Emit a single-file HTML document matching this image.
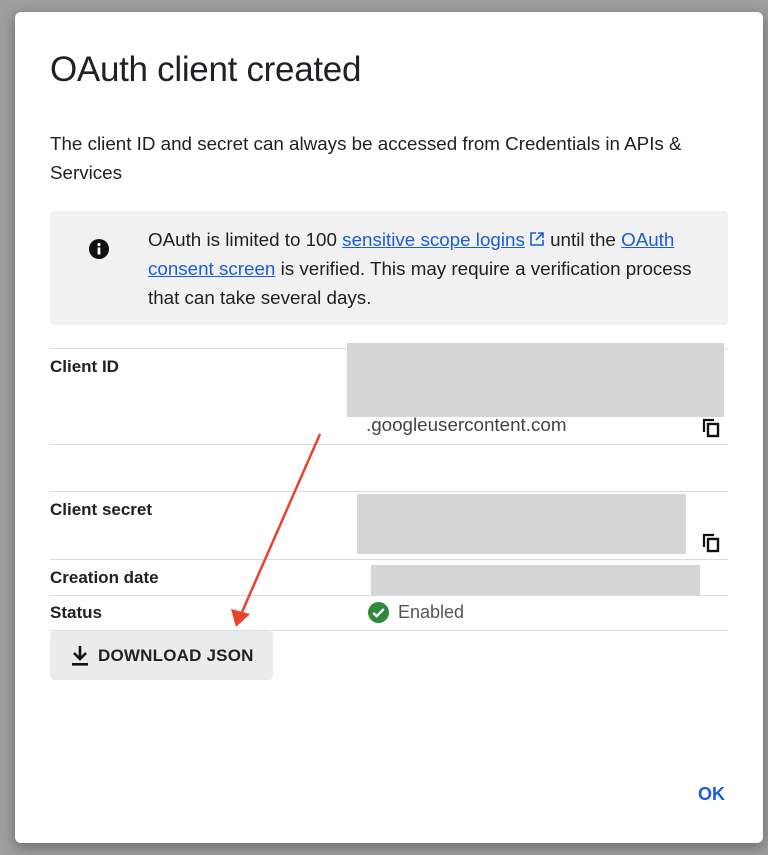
<!DOCTYPE html>
<html><head><meta charset="utf-8"><style>
body{margin:0;width:768px;height:855px;background:#9e9e9e;position:relative;overflow:hidden;font-family:"Liberation Sans",sans-serif;color:#202124}
.d{position:absolute;left:15px;top:12px;width:748px;height:831px;background:#fff;border-radius:6px;box-shadow:0 4px 14px rgba(0,0,0,.35)}
.a{position:absolute;white-space:nowrap}
.t{font-size:35px;left:50px;top:50px;letter-spacing:-0.3px}
.p{font-size:18.8px;line-height:29px}
.hr{position:absolute;left:50px;width:678px;height:1px;background:#dadce0}
.g{position:absolute;background:#d6d6d6}
.l{font-size:17px;font-weight:bold;color:#202124}
a{color:#1a5ed8;text-decoration:underline}
</style></head><body>
<div class="d"></div>
<div class="a t">OAuth client created</div>
<div class="a p" style="left:50px;top:129px">The client ID and secret can always be accessed from Credentials in APIs &amp;<br>Services</div>
<div style="position:absolute;left:50px;top:211px;width:678px;height:114px;background:#f1f1f1;border-radius:4px"></div>
<svg style="position:absolute;left:89px;top:239px" width="20" height="20" viewBox="0 0 20 20"><circle cx="10" cy="10" r="10" fill="#111"/><rect x="8.6" y="8.5" width="2.8" height="7" fill="#fff"/><circle cx="10" cy="5.6" r="1.6" fill="#fff"/></svg>
<div class="a p" style="left:148px;top:225px">OAuth is limited to 100 <a>sensitive scope logins</a><svg width="16" height="16" viewBox="0 0 16 16" style="vertical-align:-1px;margin-left:4px"><path d="M7 2H2v12h12V9M9 2h5v5M14 2L7 9" fill="none" stroke="#1a5ed8" stroke-width="1.6"/></svg> until the <a>OAuth</a><br><a>consent screen</a> is verified. This may require a verification process<br>that can take several days.</div>
<div class="hr" style="top:348px"></div>
<div class="hr" style="top:444px"></div>
<div class="hr" style="top:491px"></div>
<div class="hr" style="top:559px"></div>
<div class="hr" style="top:595px"></div>
<div class="hr" style="top:630px"></div>
<div class="a l" style="left:50px;top:357px">Client ID</div>
<div class="a l" style="left:50px;top:500px">Client secret</div>
<div class="a l" style="left:50px;top:568px">Creation date</div>
<div class="a l" style="left:50px;top:603px">Status</div>
<div class="g" style="left:347px;top:343px;width:377px;height:74px"></div>
<div class="a" style="left:366px;top:414px;font-size:18.8px;color:#444">.googleusercontent.com</div>
<div class="g" style="left:357px;top:494px;width:329px;height:60px"></div>
<div class="g" style="left:371px;top:565px;width:329px;height:30px"></div>
<svg style="position:absolute;left:702px;top:418px" width="20" height="20" viewBox="0 0 20 20"><path d="M2 14V2h10" fill="none" stroke="#111" stroke-width="2.2"/><rect x="6" y="6" width="10" height="12" fill="none" stroke="#111" stroke-width="2.4"/></svg>
<svg style="position:absolute;left:702px;top:533px" width="20" height="20" viewBox="0 0 20 20"><path d="M2 14V2h10" fill="none" stroke="#111" stroke-width="2.2"/><rect x="6" y="6" width="10" height="12" fill="none" stroke="#111" stroke-width="2.4"/></svg>
<svg style="position:absolute;left:368px;top:602px" width="21" height="21" viewBox="0 0 20 20"><circle cx="10" cy="10" r="10" fill="#2e8b3e"/><path d="M5 10.3l3.2 3.2L15 6.7" fill="none" stroke="#fff" stroke-width="2.2"/></svg>
<div class="a" style="left:398px;top:602px;font-size:18px;color:#555">Enabled</div>
<div style="position:absolute;left:50px;top:631px;width:223px;height:49px;background:#ebebeb;border-radius:4px"></div>
<svg style="position:absolute;left:70px;top:645px" width="20" height="22" viewBox="0 0 20 22"><path d="M10 1v12M4 8l6 6 6-6" fill="none" stroke="#111" stroke-width="2.6"/><rect x="2" y="18" width="16" height="2.6" fill="#111"/></svg>
<div class="a" style="left:98px;top:646px;font-size:17px;font-weight:bold;letter-spacing:0.2px">DOWNLOAD JSON</div>
<svg style="position:absolute;left:0;top:0" width="768" height="855"><line x1="320" y1="434" x2="242" y2="612" stroke="#e8432c" stroke-width="2.5"/><path d="M236 627L231 609L250 614Z" fill="#e8432c"/></svg>
<div class="a" style="left:698px;top:784px;font-size:18px;font-weight:bold;color:#1a5ed8">OK</div>
</body></html>
